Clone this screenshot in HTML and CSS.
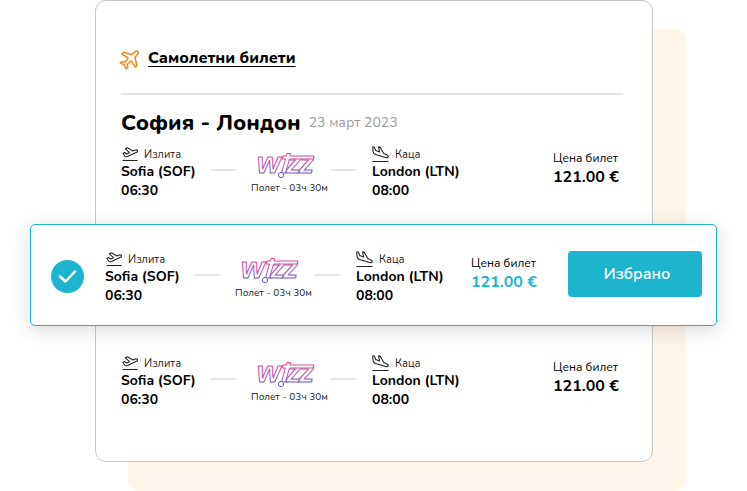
FILE: index.html
```html
<!DOCTYPE html>
<html lang="bg">
<head>
<meta charset="utf-8">
<meta name="viewport" content="width=device-width, initial-scale=1">
<title>Самолетни билети</title>
<link rel="stylesheet" href="styles.css">
</head>
<body>
<svg class="defs" width="0" height="0" aria-hidden="true">
  <defs>
    <linearGradient id="wizz-ink" gradientUnits="userSpaceOnUse" x1="0" y1="2" x2="0" y2="26">
      <stop offset="0" stop-color="#e0408c"/>
      <stop offset="0.5" stop-color="#b657ae"/>
      <stop offset="1" stop-color="#5560c4"/>
    </linearGradient>
    <symbol id="takeoff" viewBox="0 0 17 17">
      <path d="M2 7.500 3.500 6.500 5.800 8 8.500 6.700 4.300 2.800 6.300 1.800 12 4.900 14.500 4C17 3.500 17.500 5.500 15.500 6.300L6.500 10.400Q4.700 11.200 3.700 10Z M1.500 14.500H16.500"/>
    </symbol>
    <symbol id="landing" viewBox="0 0 17 17">
      <path d="M.8 .8 2.400 1.300 3.800 4.500 7.600 6 6.600 .9 8.300 1.400 11.800 7.500 14.700 8.700C17 9.800 16.600 12.200 14.400 11.700L3.500 8.500Q1.200 7.500 1 5.500Z M.5 15.500H16.500"/>
    </symbol>
    <symbol id="wizz" viewBox="0 0 60 28">
      <text class="wizz-text" x="1" y="22">w</text>
      <text class="wizz-text" x="30" y="22">z</text>
      <text class="wizz-text" x="43" y="22">z</text>
      <path d="M27 5H30.500L31 2.500H34.500L34 5H58L57 8H33.500L29.500 22H25.500L29.500 8H26Z"/>
      <circle cx="25" cy="24" r="2.600"/>
    </symbol>
  </defs>
</svg>
<main class="tickets">
  <header class="tickets-head">
    <svg class="plane" viewBox="0 0 20 20" aria-hidden="true"><path d="M12.500 4.700 4.600 2.300 2.900 4 9.200 8.100 6 12.200 2.900 11.500 1.200 13.100 5.300 14.800 7.200 18.900 8.800 17.200 8.300 14.100 12.300 10.800 16.400 17.100 18 15.500 15.900 7.500 18.500 4.300C20.400 1.300 18.500 .3 16.100 1.600Z"/></svg>
    <a class="tickets-link" href="#flights">Самолетни билети</a>
  </header>
  <div class="route-head">
    <h1>София - Лондон</h1>
    <span class="date">23 март 2023</span>
  </div>
  <div id="flights">
    <article class="flight">
      <div class="journey">
        <div class="stop"><div class="stop-label"><svg class="icon"><use href="#takeoff"/></svg>Излита</div><strong>Sofia (SOF)</strong><strong>06:30</strong></div>
        <i class="dash"></i>
        <div class="carrier"><svg class="logo" role="img" aria-label="Wizz"><use href="#wizz"/></svg><span>Полет - 03ч 30м</span></div>
        <i class="dash"></i>
        <div class="stop arrival"><div class="stop-label"><svg class="icon"><use href="#landing"/></svg>Каца</div><strong>London (LTN)</strong><strong>08:00</strong></div>
      </div>
      <div class="price"><span>Цена билет</span><strong>121.00 €</strong></div>
    </article>
    <article class="flight selected">
      <svg class="check" viewBox="0 0 33 33" aria-hidden="true"><circle cx="16.500" cy="16.500" r="16.500"/><path d="M9 16.500 14.500 21.500 24 11.500"/></svg>
      <div class="journey">
        <div class="stop"><div class="stop-label"><svg class="icon"><use href="#takeoff"/></svg>Излита</div><strong>Sofia (SOF)</strong><strong>06:30</strong></div>
        <i class="dash"></i>
        <div class="carrier"><svg class="logo" role="img" aria-label="Wizz"><use href="#wizz"/></svg><span>Полет - 03ч 30м</span></div>
        <i class="dash"></i>
        <div class="stop arrival"><div class="stop-label"><svg class="icon"><use href="#landing"/></svg>Каца</div><strong>London (LTN)</strong><strong>08:00</strong></div>
      </div>
      <div class="price"><span>Цена билет</span><strong>121.00 €</strong></div>
      <button class="choose" type="button">Избрано</button>
    </article>
    <article class="flight">
      <div class="journey">
        <div class="stop"><div class="stop-label"><svg class="icon"><use href="#takeoff"/></svg>Излита</div><strong>Sofia (SOF)</strong><strong>06:30</strong></div>
        <i class="dash"></i>
        <div class="carrier"><svg class="logo" role="img" aria-label="Wizz"><use href="#wizz"/></svg><span>Полет - 03ч 30м</span></div>
        <i class="dash"></i>
        <div class="stop arrival"><div class="stop-label"><svg class="icon"><use href="#landing"/></svg>Каца</div><strong>London (LTN)</strong><strong>08:00</strong></div>
      </div>
      <div class="price"><span>Цена билет</span><strong>121.00 €</strong></div>
    </article>
  </div>
</main>
</body>
</html>
```
FILE: styles.css
```css
* { box-sizing: border-box; }

body {
  margin: 0;
  background: #fff;
  color: #000;
  font-family: Nunito, "Open Sans", "Noto Sans", sans-serif;
}

.defs { position: absolute; }

.tickets {
  margin: 0 94px 29px 95px;
  padding: 46px 29px 28px 25px;
  border: 1px solid #c8c8c8;
  border-radius: 11px;
  background: #fff;
  box-shadow: 33px 29px 0 #fff5e9;
}

.tickets-head {
  display: flex;
  align-items: center;
  gap: 9px;
  height: 48px;
  padding-bottom: 24px;
  border-bottom: 2px solid #e5e5e5;
}

.plane {
  width: 20px;
  height: 20px;
  margin: 4px 0 0 -2px;
  fill: none;
  stroke: #f08a1c;
  stroke-width: 1.500;
  stroke-linejoin: round;
}

.tickets-link {
  color: #000;
  font-size: 16px;
  font-weight: 800;
  line-height: 22px;
  text-decoration-thickness: 1px;
  text-underline-offset: 3px;
}

.route-head {
  display: flex;
  align-items: center;
  gap: 8px;
  height: 51px;
  padding-top: 4px;
}

h1 {
  margin: 0;
  font-size: 22px;
  font-weight: 800;
  line-height: 30px;
}

.date {
  color: #9b9b9b;
  font-size: 14px;
  line-height: 20px;
}

.flight {
  display: flex;
  justify-content: space-between;
  height: 78px;
  white-space: nowrap;
}

.journey {
  display: flex;
  align-items: flex-start;
}

.stop { width: 90px; }

.arrival { margin-left: 16px; }

.stop strong {
  display: block;
  font-size: 14px;
  font-weight: 700;
  line-height: 19px;
}

.stop-label {
  display: flex;
  align-items: center;
  gap: 6px;
  height: 16px;
  font-size: 11px;
  color: #222;
}

.icon {
  width: 17px;
  height: 17px;
  fill: none;
  stroke: #222;
  stroke-width: 1.100;
  stroke-linejoin: round;
}

.dash {
  width: 25px;
  height: 2px;
  margin-top: 23px;
  background: #e5e5e5;
}

.carrier {
  display: flex;
  flex-direction: column;
  align-items: center;
  width: 95px;
  padding: 5px 0 0 12px;
  font-size: 10px;
  line-height: 14px;
  color: #222;
}

.logo {
  width: 60px;
  height: 28px;
  margin: 0 8px 2px 0;
  fill: #fff;
  stroke: url(#wizz-ink);
  stroke-width: 1;
}

.wizz-text {
  font-family: "Liberation Sans", sans-serif;
  font-size: 30px;
  font-style: italic;
  font-weight: 700;
}

.price {
  width: 70px;
  padding-top: 4px;
}

.price span {
  display: block;
  font-size: 12px;
  line-height: 17px;
}

.price strong {
  display: block;
  font-size: 16px;
  font-weight: 700;
  line-height: 20px;
}

.selected {
  position: relative;
  justify-content: flex-start;
  height: 102px;
  margin: 0 -94px 29px -91px;
  padding: 26px 14px 0 20px;
  border: 1px solid #1cb5cd;
  border-radius: 5px;
  background: #fff;
  box-shadow: 0 4px 20px rgba(0, 0, 0, 0.15);
}

.check {
  width: 33px;
  height: 33px;
  margin: 9px 21px 0 0;
}

.check circle { fill: #1cb5cd; }

.check path {
  fill: none;
  stroke: #fff;
  stroke-width: 2.500;
  stroke-linecap: round;
  stroke-linejoin: round;
}

.selected .price { margin-left: 25px; }

.selected .price strong { color: #1cb5cd; }

.choose {
  width: 134px;
  height: 46px;
  margin-left: auto;
  padding: 0 4px 0 8px;
  border: 0;
  border-radius: 4px;
  background: #1cb5cd;
  color: #fff;
  font-family: inherit;
  font-size: 16px;
  font-weight: 600;
}
```
